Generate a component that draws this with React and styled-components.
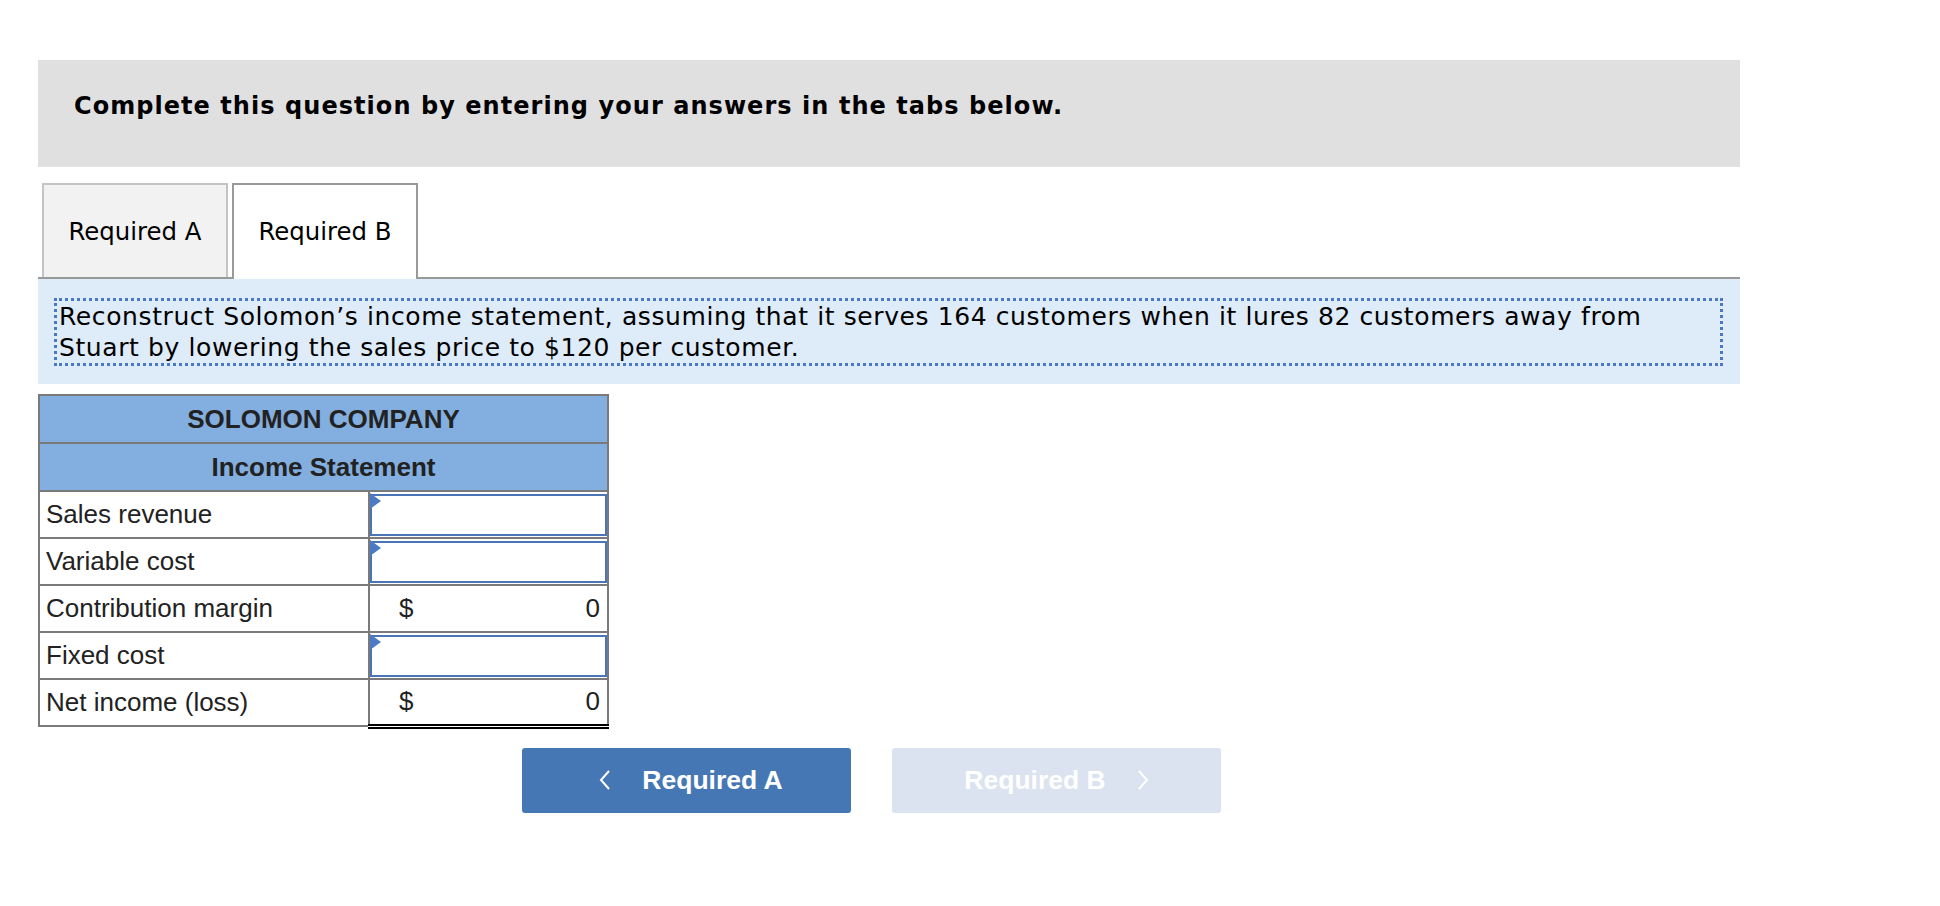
import React from 'react'
import styled, { createGlobalStyle } from 'styled-components'

const GlobalStyle = createGlobalStyle`
  body {
    margin: 0;
    background: #ffffff;
    font-family: "DejaVu Sans", Verdana, sans-serif;
    color: #000;
  }
`

const rows = [
  { label: 'Sales revenue', kind: 'input' },
  { label: 'Variable cost', kind: 'input' },
  { label: 'Contribution margin', kind: 'total', value: '0' },
  { label: 'Fixed cost', kind: 'input' },
  { label: 'Net income (loss)', kind: 'final', value: '0' },
]

const App = () => {
  return (
    <>
      <GlobalStyle />
      <Page>
        <Banner>Complete this question by entering your answers in the tabs below.</Banner>
        <Tabs>
          <Tab>Required A</Tab>
          <Tab $active>Required B</Tab>
        </Tabs>
        <Prompt>
          <PromptText>
            Reconstruct Solomon’s income statement, assuming that it serves 164 customers when it lures 82 customers away from
            <br />
            Stuart by lowering the sales price to $120 per customer.
          </PromptText>
        </Prompt>
        <Sheet>
          <tbody>
            <tr>
              <HeadCell colSpan={2}>SOLOMON COMPANY</HeadCell>
            </tr>
            <tr>
              <HeadCell colSpan={2}>Income Statement</HeadCell>
            </tr>
            {rows.map((r) => (
              <tr key={r.label}>
                <LabelCell>{r.label}</LabelCell>
                {r.kind === 'input' ? (
                  <InputCell>
                    <Entry>
                      <Marker />
                    </Entry>
                  </InputCell>
                ) : (
                  <ValueCell $final={r.kind === 'final'}>
                    <Amount>
                      <span>$</span>
                      <span>{r.value}</span>
                    </Amount>
                  </ValueCell>
                )}
              </tr>
            ))}
          </tbody>
        </Sheet>
        <Nav>
          <NavButton $back>
            <Chevron viewBox="0 0 12 22">
              <path d="M10 2 L2 11 L10 20" />
            </Chevron>
            Required A
          </NavButton>
          <NavButton $disabled>
            Required B
            <Chevron viewBox="0 0 12 22">
              <path d="M2 2 L10 11 L2 20" />
            </Chevron>
          </NavButton>
        </Nav>
      </Page>
    </>
  )
}

export default App

const Page = styled.div`
  width: 1702px;
  padding: 60px 0 0 38px;
`
const Banner = styled.div`
  height: 107px;
  box-sizing: border-box;
  background: #e0e0e0;
  padding: 32px 0 0 36px;
  font-size: 24px;
  letter-spacing: 1.05px;
  font-weight: bold;
`
const Tabs = styled.div`
  display: flex;
  gap: 4px;
  margin-top: 16px;
  padding-left: 4px;
  border-bottom: 2px solid #999999;
`
const Tab = styled.div`
  width: 186px;
  box-sizing: border-box;
  display: flex;
  align-items: center;
  justify-content: center;
  font-size: 24.4px;
  background: ${(p) => (p.$active ? '#ffffff' : '#f2f2f2')};
  border: 2px solid ${(p) => (p.$active ? '#999999' : '#c4c4c4')};
  border-bottom: none;
  margin-bottom: ${(p) => (p.$active ? '-2px' : '0')};
  height: ${(p) => (p.$active ? '96px' : '94px')};
  padding-bottom: ${(p) => (p.$active ? '2px' : '0')};
`
const Prompt = styled.div`
  background: #deebf8;
  height: 105px;
  box-sizing: border-box;
  padding: 19px 17px 0 16px;
`
const PromptText = styled.div`
  border: 3px dotted #4a78c2;
  padding: 0 2px;
  font-size: 25px;
  letter-spacing: 0.6px;
  line-height: 31px;
  white-space: nowrap;
`
const Sheet = styled.table`
  margin-top: 10px;
  border-collapse: collapse;
  width: 571px;
  font-family: "Liberation Sans", Arial, sans-serif;
  font-size: 26px;
  color: #222;
`
const HeadCell = styled.td`
  background: #83aee0;
  border: 2px solid #7a7a7a;
  height: 46px;
  text-align: center;
  font-weight: bold;
  padding: 0;
`
const LabelCell = styled.td`
  border: 2px solid #7a7a7a;
  width: 322px;
  height: 45px;
  padding: 0 0 0 6px;
`
const InputCell = styled.td`
  border: 2px solid #7a7a7a;
  padding: 2px 0 1px 0;
`
const Entry = styled.div`
  position: relative;
  height: 42px;
  box-sizing: border-box;
  background: #fff;
  border: 2px solid #4a76b8;
`
const Marker = styled.div`
  position: absolute;
  left: -2px;
  top: -3px;
  width: 0;
  height: 0;
  border-top: 8px solid transparent;
  border-bottom: 8px solid transparent;
  border-left: 11px solid #4a7bc4;
`
const ValueCell = styled.td`
  border: 2px solid #7a7a7a;
  border-top: 2px solid #000;
  border-bottom: ${(p) => (p.$final ? '5px double #000' : '2px solid #7a7a7a')};
  padding: 0 7px 0 29px;
`
const Amount = styled.div`
  display: flex;
  justify-content: space-between;
`
const Nav = styled.div`
  display: flex;
  gap: 41px;
  margin: 19px 0 0 484px;
`
const NavButton = styled.div`
  width: 329px;
  height: 65px;
  box-sizing: border-box;
  border-radius: 3px;
  display: flex;
  align-items: center;
  justify-content: center;
  gap: 31px;
  padding-left: ${(p) => (p.$back ? '9px' : '0')};
  font-family: "Liberation Sans", Arial, sans-serif;
  font-weight: bold;
  font-size: 26.5px;
  color: #ffffff;
  background: ${(p) => (p.$disabled ? '#dae3ef' : '#4677b5')};
`
const Chevron = styled.svg`
  width: 12px;
  height: 22px;
  fill: none;
  stroke: #ffffff;
  stroke-width: 2;
`
